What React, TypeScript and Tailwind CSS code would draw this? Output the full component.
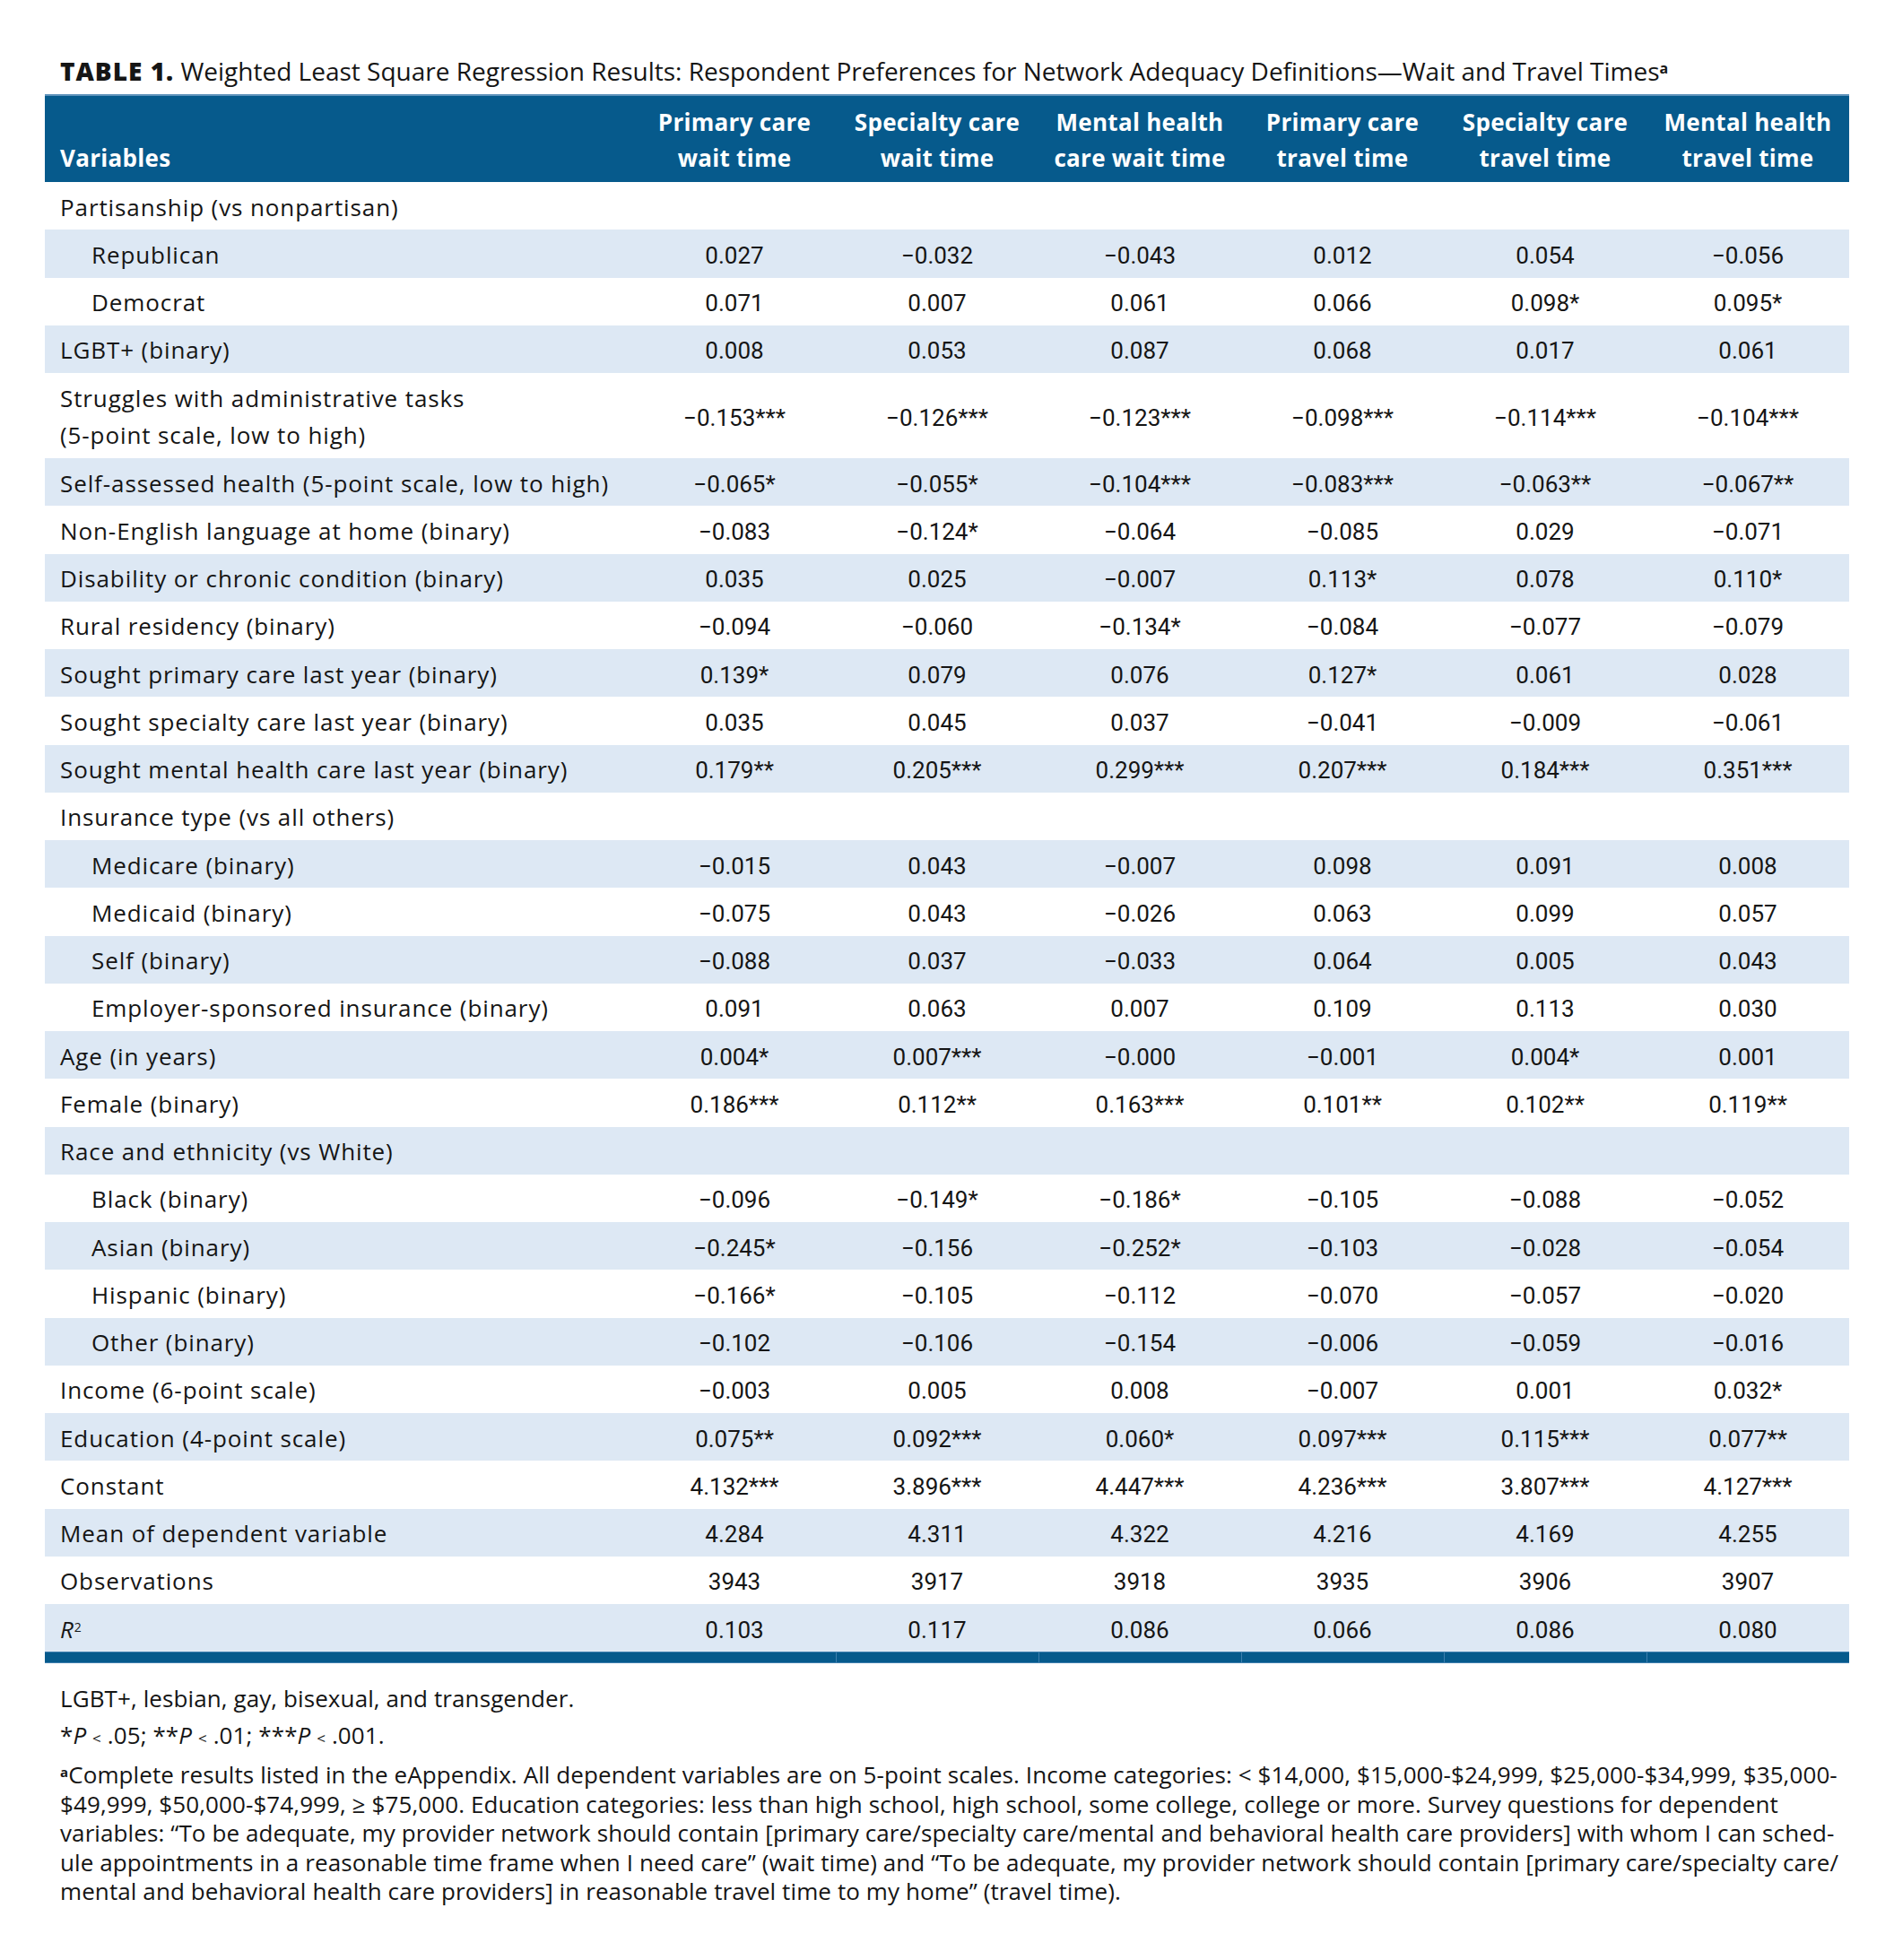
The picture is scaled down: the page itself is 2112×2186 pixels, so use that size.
const rows: { label: string | string[]; indent?: boolean; vals?: string[] }[] = [
  { label: "Partisanship (vs nonpartisan)" },
  { label: "Republican", indent: true, vals: ["0.027", "−0.032", "−0.043", "0.012", "0.054", "−0.056"] },
  { label: "Democrat", indent: true, vals: ["0.071", "0.007", "0.061", "0.066", "0.098*", "0.095*"] },
  { label: "LGBT+ (binary)", vals: ["0.008", "0.053", "0.087", "0.068", "0.017", "0.061"] },
  {
    label: ["Struggles with administrative tasks", "(5-point scale, low to high)"],
    vals: ["−0.153***", "−0.126***", "−0.123***", "−0.098***", "−0.114***", "−0.104***"],
  },
  { label: "Self-assessed health (5-point scale, low to high)", vals: ["−0.065*", "−0.055*", "−0.104***", "−0.083***", "−0.063**", "−0.067**"] },
  { label: "Non-English language at home (binary)", vals: ["−0.083", "−0.124*", "−0.064", "−0.085", "0.029", "−0.071"] },
  { label: "Disability or chronic condition (binary)", vals: ["0.035", "0.025", "−0.007", "0.113*", "0.078", "0.110*"] },
  { label: "Rural residency (binary)", vals: ["−0.094", "−0.060", "−0.134*", "−0.084", "−0.077", "−0.079"] },
  { label: "Sought primary care last year (binary)", vals: ["0.139*", "0.079", "0.076", "0.127*", "0.061", "0.028"] },
  { label: "Sought specialty care last year (binary)", vals: ["0.035", "0.045", "0.037", "−0.041", "−0.009", "−0.061"] },
  { label: "Sought mental health care last year (binary)", vals: ["0.179**", "0.205***", "0.299***", "0.207***", "0.184***", "0.351***"] },
  { label: "Insurance type (vs all others)" },
  { label: "Medicare (binary)", indent: true, vals: ["−0.015", "0.043", "−0.007", "0.098", "0.091", "0.008"] },
  { label: "Medicaid (binary)", indent: true, vals: ["−0.075", "0.043", "−0.026", "0.063", "0.099", "0.057"] },
  { label: "Self (binary)", indent: true, vals: ["−0.088", "0.037", "−0.033", "0.064", "0.005", "0.043"] },
  { label: "Employer-sponsored insurance (binary)", indent: true, vals: ["0.091", "0.063", "0.007", "0.109", "0.113", "0.030"] },
  { label: "Age (in years)", vals: ["0.004*", "0.007***", "−0.000", "−0.001", "0.004*", "0.001"] },
  { label: "Female (binary)", vals: ["0.186***", "0.112**", "0.163***", "0.101**", "0.102**", "0.119**"] },
  { label: "Race and ethnicity (vs White)" },
  { label: "Black (binary)", indent: true, vals: ["−0.096", "−0.149*", "−0.186*", "−0.105", "−0.088", "−0.052"] },
  { label: "Asian (binary)", indent: true, vals: ["−0.245*", "−0.156", "−0.252*", "−0.103", "−0.028", "−0.054"] },
  { label: "Hispanic (binary)", indent: true, vals: ["−0.166*", "−0.105", "−0.112", "−0.070", "−0.057", "−0.020"] },
  { label: "Other (binary)", indent: true, vals: ["−0.102", "−0.106", "−0.154", "−0.006", "−0.059", "−0.016"] },
  { label: "Income (6-point scale)", vals: ["−0.003", "0.005", "0.008", "−0.007", "0.001", "0.032*"] },
  { label: "Education (4-point scale)", vals: ["0.075**", "0.092***", "0.060*", "0.097***", "0.115***", "0.077**"] },
  { label: "Constant", vals: ["4.132***", "3.896***", "4.447***", "4.236***", "3.807***", "4.127***"] },
  { label: "Mean of dependent variable", vals: ["4.284", "4.311", "4.322", "4.216", "4.169", "4.255"] },
  { label: "Observations", vals: ["3943", "3917", "3918", "3935", "3906", "3907"] },
  { label: "R2", vals: ["0.103", "0.117", "0.086", "0.066", "0.086", "0.080"] },
];

const headers = [
  ["Primary care", "wait time"],
  ["Specialty care", "wait time"],
  ["Mental health", "care wait time"],
  ["Primary care", "travel time"],
  ["Specialty care", "travel time"],
  ["Mental health", "travel time"],
];

const noteLines = [
  "Complete results listed in the eAppendix. All dependent variables are on 5-point scales. Income categories: < $14,000, $15,000-$24,999, $25,000-$34,999, $35,000-",
  "$49,999, $50,000-$74,999, ≥ $75,000. Education categories: less than high school, high school, some college, college or more. Survey questions for dependent",
  "variables: “To be adequate, my provider network should contain [primary care/specialty care/mental and behavioral health care providers] with whom I can sched-",
  "ule appointments in a reasonable time frame when I need care” (wait time) and “To be adequate, my provider network should contain [primary care/specialty care/",
  "mental and behavioral health care providers] in reasonable travel time to my home” (travel time).",
];

function Label({ label }: { label: string | string[] }) {
  if (label === "R2")
    return (
      <span>
        <i>R</i>
        <sup className="text-[14px]">2</sup>
      </span>
    );
  if (Array.isArray(label))
    return (
      <div className="leading-[41px]">
        {label.map((l) => (
          <div key={l}>{l}</div>
        ))}
      </div>
    );
  return <span>{label}</span>;
}

export default function App() {
  return (
    <div className="min-h-[2186px] w-[2112px] bg-white text-[#151515] font-['Open_Sans',sans-serif]">
      <div className="px-[50px] pt-[61px]">
        <h1 className="pl-[17px] text-[28px] leading-[36px] font-normal">
          <span className="font-extrabold tracking-[1px]">TABLE 1.</span> Weighted Least Square Regression Results: Respondent
          Preferences for Network Adequacy Definitions—Wait and Travel Times
          <sup className="text-[16px] font-bold">a</sup>
        </h1>

        <div className="mt-[8px] w-[2012px]">
          {/* header */}
          <div className="flex h-[98px] items-end border-t-2 border-[#5f93bb] bg-[#065a8c] pb-[7px] text-[26px] font-bold leading-[40px] tracking-[0.3px] text-white">
            <div className="w-[656px] pl-[17px]">Variables</div>
            {headers.map((h, i) => (
              <div key={i} className="w-[226px] text-center">
                <div>{h[0]}</div>
                <div>{h[1]}</div>
              </div>
            ))}
          </div>

          {/* body */}
          {rows.map((r, i) => (
            <div
              key={i}
              className={`flex items-center pt-[3px] text-[26px] ${Array.isArray(r.label) ? "h-[95px]" : "h-[53.25px]"} ${
                i % 2 === 1 ? "bg-[#dde8f4]" : "bg-white"
              }`}
            >
              <div className={`w-[656px] tracking-[0.9px] ${r.indent ? "pl-[52px]" : "pl-[17px]"}`}>
                <Label label={r.label} />
              </div>
              {r.vals?.map((v, j) => (
                <div key={j} className="w-[226px] pt-[2px] text-center font-['Roboto',sans-serif]">
                  {v}
                </div>
              ))}
            </div>
          ))}

          {/* bottom rule */}
          <div className="flex h-[13px] border-y border-[#3f7fae] bg-[#065a8c]">
            <div className="w-[656px]" />
            {headers.map((_, i) => (
              <div key={i} className={`w-[226px] ${i > 0 ? "border-l border-[#3f7fae]" : ""}`} />
            ))}
          </div>
        </div>

        <div className="pl-[17px] pt-[23px] text-[26px] leading-[32.5px] tracking-[0.1px]">
          <p>LGBT+, lesbian, gay, bisexual, and transgender.</p>
          <p className="mt-[8px]">
            *<i>P</i> <span className="text-[17px]">&lt;</span> .05; **<i>P</i> <span className="text-[17px]">&lt;</span> .01;
            ***<i>P</i> <span className="text-[17px]">&lt;</span> .001.
          </p>
          <div className="mt-[8px] whitespace-nowrap">
            {noteLines.map((l, i) => (
              <div key={i}>
                {i === 0 && <sup className="text-[15px] font-bold">a</sup>}
                {l}
              </div>
            ))}
          </div>
        </div>
      </div>
    </div>
  );
}
